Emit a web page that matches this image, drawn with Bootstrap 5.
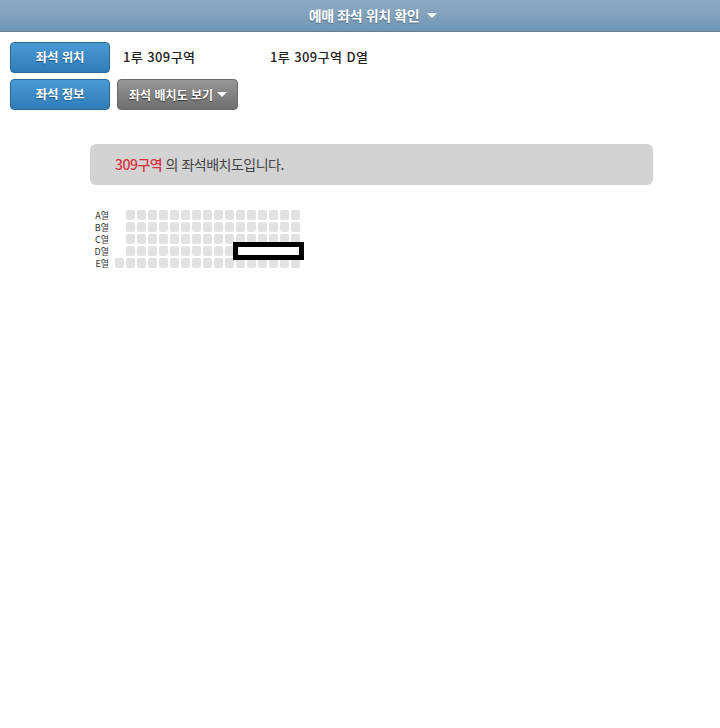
<!DOCTYPE html>
<html lang="ko">

<head>
    <meta charset="UTF-8">
    <meta name="viewport" content="width=device-width, initial-scale=1.0">
    <title>예매 좌석 위치 확인</title>
    <link href="https://cdn.jsdelivr.net/npm/bootstrap@5.3.0/dist/css/bootstrap.min.css" rel="stylesheet">
    <style>
        body {
            font-family: "Noto Sans CJK KR", "Liberation Sans", sans-serif;
            background: #fff;
            color: #222;
        }

        .top-bar {
            height: 32px;
            padding-left: 26px;
            background: linear-gradient(#8fabc4, #7196b4);
            border-bottom: 1px solid #66808f;
            color: #fff;
            font-size: 14px;
            font-weight: 700;
            letter-spacing: -.4px;
            text-shadow: 0 1px 1px #4d6a82;
        }

        .caret-down {
            width: 0;
            height: 0;
            border-left: 5px solid transparent;
            border-right: 5px solid transparent;
            border-top: 5px solid #fff;
        }

        .info-rows {
            padding: 10px 10px 0;
            gap: 6px;
        }

        .btn-row {
            gap: 7px;
        }

        .seat-btn {
            width: 100px;
            height: 31px;
            padding: 0;
            font-size: 12.5px;
            font-weight: 700;
            letter-spacing: -.2px;
            color: #fff;
            border: 1px solid #2c6a9c;
            border-radius: 4px;
            background: linear-gradient(#4a9ad6, #2f7cb9);
            text-shadow: 0 1px 1px #24557d;
        }

        .map-btn {
            width: 121px;
            height: 31px;
            padding: 0 0 0 1px;
            font-size: 12px;
            font-weight: 700;
            color: #fff;
            border: 1px solid #6a6a6a;
            border-radius: 4px;
            background: linear-gradient(#969696, #6e6e6e);
            text-shadow: 0 1px 1px #333;
        }

        .seat-text {
            padding-bottom: 2px;
            font-size: 13px;
            font-weight: 500;
            color: #222;
            letter-spacing: .4px;
        }

        .seat-text-first {
            width: 147px;
            margin-left: 13px;
        }

        .zone-box {
            height: 41px;
            margin: 34px 67px 0 90px;
            padding-left: 25px;
            background: #d3d3d3;
            border-radius: 6px;
            font-size: 14px;
            color: #444;
            letter-spacing: -.5px;
        }

        .zone-name {
            color: #d9303f;
            font-weight: 500;
        }

        .seat-map {
            position: relative;
            width: 214px;
            margin: 25px 0 0 90px;
        }

        .seat-row {
            height: 12px;
        }

        .row-name {
            width: 19px;
            font-size: 9px;
            line-height: 12px;
            color: #333;
            text-align: right;
            white-space: nowrap;
        }

        .seat-cells {
            display: flex;
            gap: 2px;
            padding-left: 17px;
        }

        .seat-cells-long {
            padding-left: 6px;
        }

        .seat-cell {
            width: 9px;
            height: 10px;
            background: #e2e2e2;
            border-radius: 2px;
        }

        .seat-mark {
            position: absolute;
            left: 143px;
            top: 32px;
            width: 71px;
            height: 18px;
            background: #fff;
            border: 5px solid #000;
        }
    </style>
</head>

<body>
    <div class="top-bar d-flex align-items-center justify-content-center gap-2">
        <span>예매 좌석 위치 확인</span>
        <span class="caret-down"></span>
    </div>

    <div class="info-rows d-flex flex-column">
        <div class="d-flex align-items-center">
            <button type="button" class="btn seat-btn">좌석 위치</button>
            <span class="seat-text seat-text-first">1루 309구역</span>
            <span class="seat-text">1루 309구역 D열</span>
        </div>
        <div class="btn-row d-flex align-items-center">
            <button type="button" class="btn seat-btn">좌석 정보</button>
            <button type="button" class="btn map-btn d-flex align-items-center justify-content-center gap-1">
                좌석 배치도 보기 <span class="caret-down"></span>
            </button>
        </div>
    </div>

    <div class="zone-box d-flex align-items-center">
        <span><span class="zone-name">309구역</span> 의 좌석배치도입니다.</span>
    </div>

    <div class="seat-map" id="seatMap">
        <div class="seat-mark"></div>
    </div>

    <script>
        // rows of the seat map, E row has one extra seat on the left
        const rows = [['A열', 16], ['B열', 16], ['C열', 16], ['D열', 16], ['E열', 17]];
        const seatMap = document.getElementById('seatMap');
        rows.forEach(([name, count]) => {
            const row = document.createElement('div');
            row.className = 'seat-row d-flex';
            let cells = '';
            for (let i = 0; i < count; i++) {
                cells += '<div class="seat-cell"></div>';
            }
            const long = count > 16 ? ' seat-cells-long' : '';
            row.innerHTML = `<div class="row-name">${name}</div><div class="seat-cells${long}">${cells}</div>`;
            seatMap.insertBefore(row, seatMap.lastElementChild);
        });
    </script>
    <script src="https://cdn.jsdelivr.net/npm/bootstrap@5.3.0/dist/js/bootstrap.bundle.min.js"></script>
</body>

</html>
